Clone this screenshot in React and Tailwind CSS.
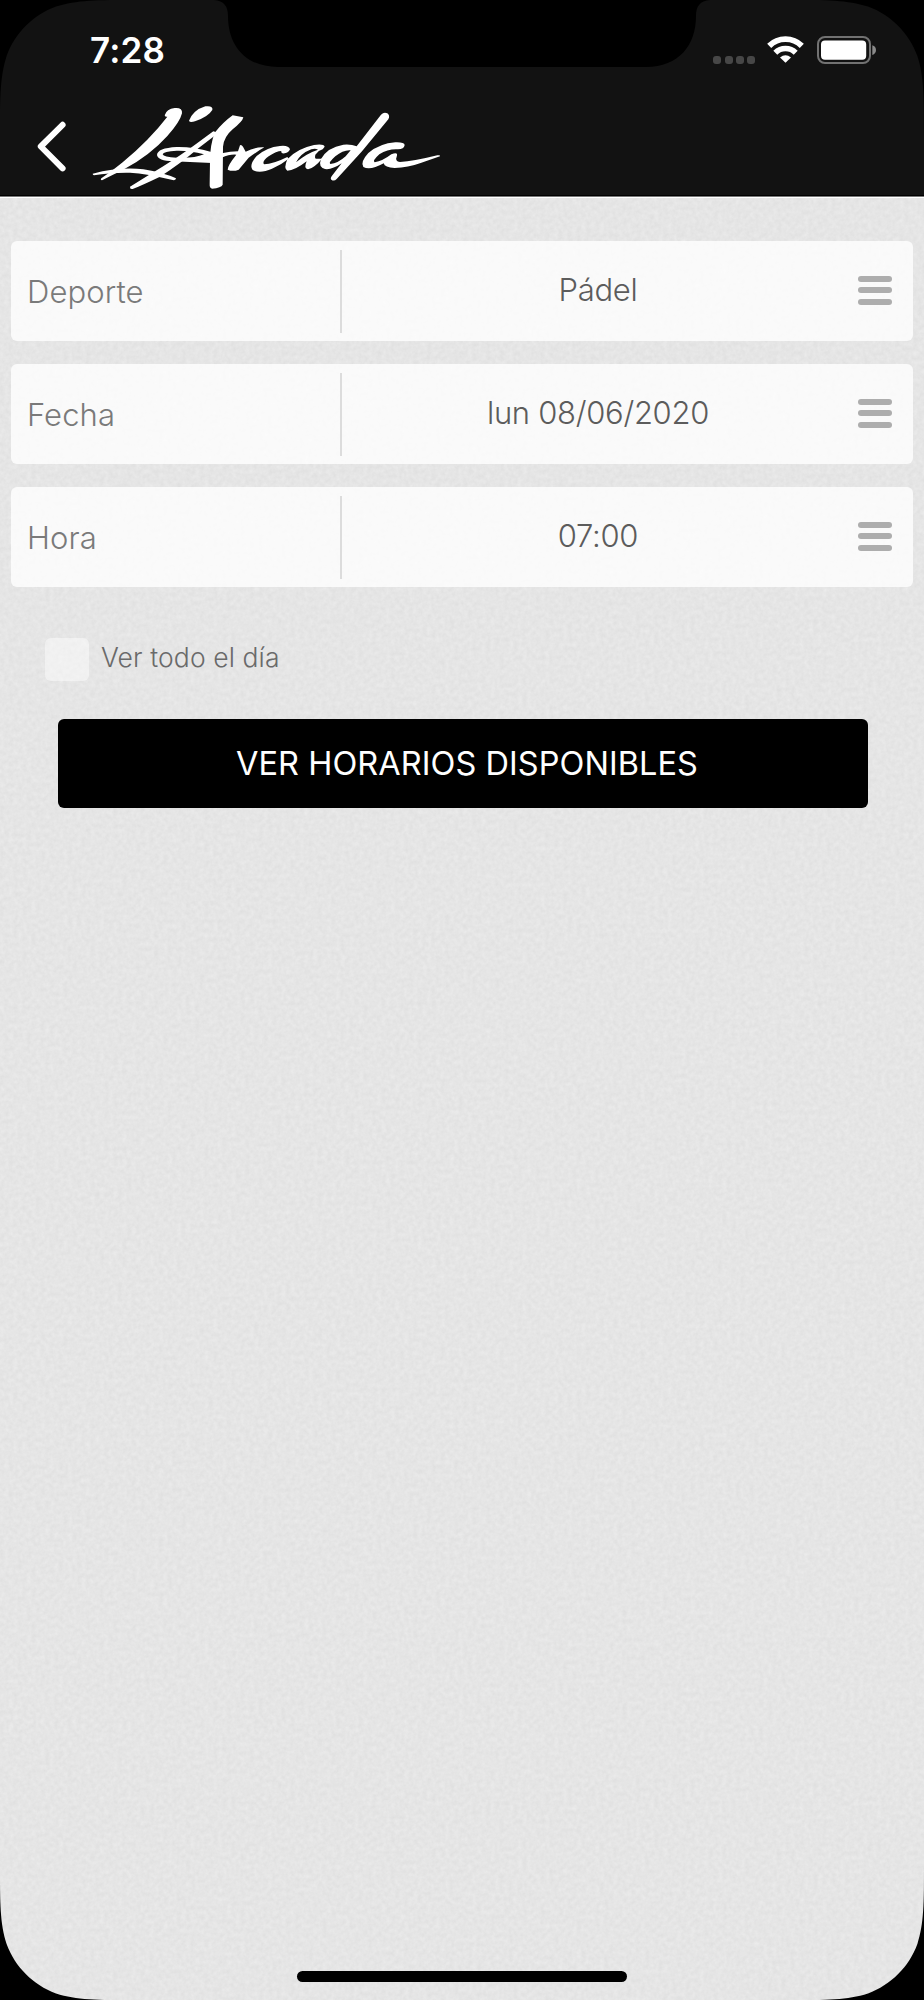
const fields = [
  { label: "Deporte", value: "Pádel" },
  { label: "Fecha", value: "lun 08/06/2020" },
  { label: "Hora", value: "07:00" },
];

function Logo() {
  return (
    <svg viewBox="0 0 1110 330" className="h-[110px] w-[370px] shrink-0" fill="#fff" role="img" aria-label="L'Arcada">
      <path d="M254 76Q260 56 284 54Q308 52 306 70Q300 96 262 138Q210 196 132 238L66 271Q60 270 64 265Q92 246 128 217Q210 148 262 80Q256 82 254 76Z" />
      <path d="M38 251Q120 230 190 238Q250 248 288 265Q288 272 278 270Q200 251 150 248Q90 247 42 256Q38 255 38 251Z" />
      <path d="M327 92Q340 60 376 49Q400 46 397 60Q385 80 345 94Q329 99 327 92Z" />
      <path d="M150 290Q200 259 246 231Q310 190 345 164L400 124L414 128L404 137L356 174Q300 222 240 260Q190 284 158 297Q149 299 150 290Z" />
      <path fillRule="evenodd" d="M394 186Q340 170 290 171Q232 174 231 195Q233 212 280 214L396 219ZM372 193Q330 181 290 182Q250 184 248 193Q250 202 290 203Q340 206 372 193Z" />
      <path d="M404 128Q430 96 458 76L490 82Q488 94 458 118Q432 140 429 170L428 284Q424 293 396 296Q388 294 389 282L390 212Q390 165 404 128Z" />
      <path d="M425 190Q452 184 474 184L480 166Q484 163 489 170L497 185Q526 170 553 172Q532 184 506 203L476 239Q458 246 443 239Q443 226 469 194Q450 192 425 203Z" />
      <path d="M630 178Q626 165 600 168Q560 172 530 198Q506 225 518 240Q540 252 576 236Q604 224 626 206L622 201Q580 222 552 223Q545 214 566 199Q590 183 604 183Q602 192 614 190Q626 188 630 178Z" />
      <path fillRule="evenodd" d="M734 170Q732 161 702 165Q650 176 622 208Q610 236 622 242Q644 242 680 214Q670 236 684 238Q704 233 726 206L710 206Q703 208 706 194Q716 181 728 178ZM714 179Q680 190 648 217Q662 190 694 178Q706 174 714 179Z" />
      <path fillRule="evenodd" d="M903 74Q912 65 922 70Q931 76 925 88L846 184L770 267Q762 275 754 269Q750 265 756 257L785 220Q756 240 735 237Q714 231 723 207Q742 172 790 164Q814 162 830 169ZM812 181Q790 179 766 199Q744 219 751 222Q774 220 797 199Z" />
      <path d="M974 165Q973 156 946 157Q900 160 865 189Q840 216 850 231Q870 243 911 220Q914 233 944 234Q984 233 1022 219L1080 199Q1082 194 1072 196Q1000 214 960 216Q944 213 950 200Q956 184 934 193Q908 213 884 217Q876 213 898 193Q925 176 954 178Q972 178 974 165Z" />
    </svg>
  );
}

function Wifi() {
  return (
    <svg viewBox="0 0 37 27" className="h-[27px] w-[37px]" fill="none" stroke="#fff">
      <path d="M2.2 9.9A23.2 23.2 0 0 1 34.8 9.9" strokeWidth="5.8" />
      <path d="M8.3 16.7A14.3 14.3 0 0 1 28.7 16.7" strokeWidth="5.5" />
      <path d="M18.5 26.8L13 21.5Q18.5 16.8 24 21.5Z" fill="#fff" stroke="none" />
    </svg>
  );
}

function Battery() {
  return (
    <svg viewBox="0 0 60 28" className="h-7 w-[60px]">
      <rect x="1" y="1" width="52" height="26" rx="7" fill="none" stroke="#727272" strokeWidth="2" />
      <rect x="4" y="4.4" width="45.2" height="19.4" rx="4" fill="#fff" />
      <path d="M55.3 9.2Q59 10.5 59 14T55.3 19Z" fill="#8a8a8a" />
    </svg>
  );
}

function Texture() {
  return (
    <svg className="pointer-events-none absolute inset-0 h-full w-full" aria-hidden="true">
      <filter id="grain" x="0" y="0" width="100%" height="100%" colorInterpolationFilters="sRGB">
        <feTurbulence type="fractalNoise" baseFrequency="0.22" numOctaves="3" seed="4" />
        <feColorMatrix values="0.055 0 0 0 0.871  0.055 0 0 0 0.871  0.055 0 0 0 0.871  0 0 0 0 1" />
      </filter>
      <rect width="100%" height="100%" filter="url(#grain)" />
    </svg>
  );
}

function Corner({ className }) {
  return (
    <svg viewBox="0 0 138 138" className={"pointer-events-none absolute size-[136px] " + className}>
      <path d="M0 0H138C98 0 78 0 56.8 6.7C33.6 15.2 15.2 33.6 6.7 56.8C0 78 0 98 0 138Z" fill="#000" />
    </svg>
  );
}

function Field({ label, value }) {
  return (
    <div className="flex h-[100px] items-center rounded-md bg-white/80">
      <div className="w-[329px] pl-[16px] text-[31px] font-light leading-none tracking-[0.1px] text-[#7a7a7a]">{label}</div>
      <div className="h-[83px] w-0.5 bg-[#dcdcdc]" />
      <div className="flex-1 pb-1 pr-1 text-center text-[31px] font-light leading-none tracking-[-0.3px] text-[#5c5c5c]">
        {value}
      </div>
      <div className="mr-[21px] flex w-[34px] flex-col gap-[5.5px] pb-0.5">
        <div className="h-[6px] rounded-full bg-[#adadad]" />
        <div className="h-[6px] rounded-full bg-[#adadad]" />
        <div className="h-[6px] rounded-full bg-[#adadad]" />
      </div>
    </div>
  );
}

export default function App() {
  return (
    <div className="relative flex h-[2000px] w-[924px] flex-col overflow-hidden bg-[#e5e5e5] font-['Inter',sans-serif]">
      <header className="relative h-[196px] shrink-0 border-b border-black bg-[#121212]">
        <div className="flex h-[90px] items-start justify-between pl-[90px] pr-[47px]">
          <div className="pt-[32px] text-[35px] font-semibold leading-[36px] tracking-[0.2px] text-white">7:28</div>
          <div className="flex items-start pt-[36px]">
            <div className="mr-[12px] mt-5 flex gap-[3.2px]">
              <div className="size-2 rounded-[3px] bg-[#474747]" />
              <div className="size-2 rounded-[3px] bg-[#474747]" />
              <div className="size-2 rounded-[3px] bg-[#474747]" />
              <div className="size-2 rounded-[3px] bg-[#474747]" />
            </div>
            <Wifi />
            <div className="ml-[13px]"><Battery /></div>
          </div>
        </div>
        <div className="flex h-[105px] items-start pl-8">
          <svg viewBox="0 0 48 105" className="h-[105px] w-12" fill="none" stroke="#fff" strokeWidth="6" strokeLinecap="round" strokeLinejoin="round">
            <path d="M30.6 34.8L8.8 56.5L30.6 78.4" />
          </svg>
          <Logo />
        </div>
        <svg viewBox="0 0 496 68" className="absolute left-[214px] top-0 h-[68px] w-[496px]">
          <path d="M0 0C10 1 14 6 14 16C14 45 31 67 64 67H432C465 67 482 45 482 16C482 6 486 1 496 0Z" fill="#000" />
        </svg>
      </header>

      <main className="relative flex-1 border-t border-[#777]">
        <Texture />
        <div className="relative border-t border-white px-[11px] pt-[43px]">
          <div className="flex flex-col gap-[23px]">
            {fields.map((f) => (
              <Field key={f.label} {...f} />
            ))}
          </div>
          <div className="mt-[51px] flex h-[43px] pl-[34px]">
            <div className="h-[43px] w-11 rounded-md bg-white/45" />
            <div className="pl-3 pt-1.5 text-[26.5px] font-light leading-[27px] tracking-[0.1px] text-[#6a6a6a]">Ver todo el día</div>
          </div>
          <div className="ml-[47px] mt-[38px] flex h-[89px] w-[810px] items-center justify-center rounded-md bg-black pl-2 pt-[2px] text-[32.5px] leading-none tracking-[0.05px] text-white">
            VER HORARIOS DISPONIBLES
          </div>
        </div>
        <div className="absolute bottom-[18px] left-[297px] h-[11px] w-[330px] rounded-full bg-black" />
      </main>

      <Corner className="left-0 top-0" />
      <Corner className="right-0 top-0 -scale-x-100" />
      <Corner className="bottom-0 left-0 -scale-y-100" />
      <Corner className="bottom-0 right-0 -scale-100" />
    </div>
  );
}
